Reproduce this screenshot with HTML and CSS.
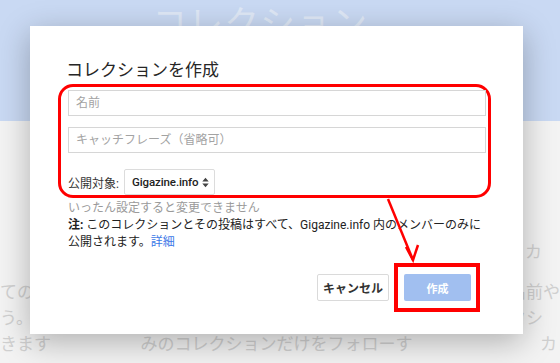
FILE: index.html
```
<!DOCTYPE html>
<html lang="ja">
<head>
    <meta charset="UTF-8">
    <title>コレクションを作成</title>
    <link rel="stylesheet" href="styles.css">
</head>
<body>
    <div class="page">
        <div class="page-head">
            <span class="page-head-title">コレクション</span>
        </div>
        <div class="page-body">
            <div class="bg-col bg-left">
                <p>ての</p>
                <p>う。</p>
                <p>きます</p>
            </div>
            <div class="bg-col bg-mid">
                <p>みのコレクションだけをフォローす</p>
            </div>
            <div class="bg-col bg-right">
                <p class="bg-heading">カ</p>
                <p>名前や</p>
                <p>クシ</p>
                <p class="bg-indent">カ</p>
            </div>
        </div>
    </div>

    <div class="dialog">
        <h1 class="dialog-title">コレクションを作成</h1>

        <div class="callout-box">
            <input type="text" class="field" placeholder="名前">
            <input type="text" class="field field-gap" placeholder="キャッチフレーズ（省略可）">
            <div class="audience">
                <span class="audience-label">公開対象:</span>
                <div class="select">
                    <span>Gigazine.info</span>
                    <svg width="7" height="11" viewBox="0 0 7 11">
                        <path d="M0.3 4.4 L3.5 0.8 L6.7 4.4 Z M0.3 6.6 L3.5 10.2 L6.7 6.6 Z" fill="#444"/>
                    </svg>
                </div>
            </div>
        </div>

        <p class="hint">いったん設定すると変更できません</p>
        <p class="note"><b>注:</b> このコレクションとその投稿はすべて、Gigazine.info 内のメンバーのみに<br>公開されます。<a class="more" href="#">詳細</a></p>

        <div class="actions">
            <button class="btn btn-cancel">キャンセル</button>
            <div class="callout-square">
                <button class="btn btn-create">作成</button>
            </div>
        </div>
    </div>

    <!-- annotation arrow from the fields to the create button -->
    <svg class="callout-arrow" width="45" height="72" viewBox="0 0 45 72">
        <line x1="8" y1="4" x2="33" y2="65" stroke="#f00" stroke-width="2.5"/>
        <polyline points="26,52 33,65 38,50" fill="none" stroke="#f00" stroke-width="2.5"/>
    </svg>
</body>
</html>
```

FILE: styles.css
```
* {
    box-sizing: border-box;
}
body {
    margin: 0;
    width: 560px;
    height: 363px;
    overflow: hidden;
    position: relative;
    font-family: 'Roboto', 'Noto Sans CJK JP', sans-serif;
    background-color: #f3f3f3;
}
p {
    margin: 0;
}
.page-head {
    height: 121px;
    background-color: #c9d9f3;
    text-align: center;
    padding: 5px 40px 0 0;
    overflow: hidden;
}
.page-head-title {
    font-size: 35px;
    line-height: 40px;
    color: #dfe8f6;
    letter-spacing: 1px;
}
.page-body {
    height: 242px;
    display: flex;
    overflow: hidden;
    color: #d0d0d0;
    font-size: 17px;
    line-height: 26px;
    white-space: nowrap;
}
.bg-left {
    width: 144px;
    padding-top: 158px;
}
.bg-mid {
    width: 376px;
    padding-top: 210px;
}
.bg-right {
    flex: 1;
    padding: 118px 0 0 2px;
}
.bg-heading {
    padding-left: 16px;
    margin-bottom: 14px;
}
.bg-indent {
    padding-left: 31px;
}
.dialog {
    position: absolute;
    left: 30px;
    top: 26px;
    width: 493px;
    height: 308px;
    background-color: #ffffff;
    padding: 32px 37px 0 38px;
    box-shadow: 0 8px 30px rgba(0, 0, 0, 0.28);
    color: #333333;
}
.dialog-title {
    margin: 0 0 2px -2px;
    font-size: 17px;
    font-weight: 400;
    line-height: 24px;
    color: #262626;
}
.callout-box {
    margin: 0 -5px 0 -10px;
    padding: 3px 2px 0 7px;
    border: 3px solid #ff0000;
    border-radius: 15px;
}
.field {
    display: block;
    width: 100%;
    height: 26px;
    margin: 0;
    padding: 0 7px;
    border: 1px solid #d6d6d6;
    font-family: inherit;
    font-size: 12px;
    color: #333;
    outline: none;
}
.field::placeholder {
    color: #a3a3a3;
}
.field-gap {
    margin-top: 11px;
}
.audience {
    display: flex;
    align-items: center;
    gap: 5px;
    margin-top: 16px;
}
.audience-label {
    font-size: 12px;
    color: #333;
}
.select {
    width: 91px;
    height: 26px;
    display: flex;
    align-items: center;
    justify-content: space-between;
    padding: 0 5px 0 7px;
    border: 1px solid #dcdcdc;
    border-radius: 2px;
    font-size: 11.5px;
    font-weight: 500;
    letter-spacing: -0.1px;
    color: #222;
}
.hint {
    margin-top: 2px;
    font-size: 12px;
    line-height: 17px;
    color: #9a9a9a;
}
.note {
    font-size: 12px;
    line-height: 17px;
    color: #222;
    white-space: nowrap;
}
.more {
    color: #3b78e7;
    text-decoration: none;
}
.actions {
    display: flex;
    justify-content: flex-end;
    align-items: center;
    gap: 5px;
    margin: 12px 6px 0 0;
}
.callout-square {
    border: 4px solid #ff0000;
    padding: 7px 5px 7px 6px;
}
.btn {
    height: 27px;
    margin: 0;
    border-radius: 2px;
    font-family: inherit;
    font-size: 12px;
    font-weight: 700;
    display: block;
    padding: 0;
}
.btn-cancel {
    width: 72px;
    background-color: #ffffff;
    border: 1px solid #dadada;
    color: #333;
}
.btn-create {
    width: 67px;
    background-color: #a1bff0;
    border: none;
    color: #ffffff;
    font-size: 11px;
}
.callout-arrow {
    position: absolute;
    left: 380px;
    top: 195px;
}
```
